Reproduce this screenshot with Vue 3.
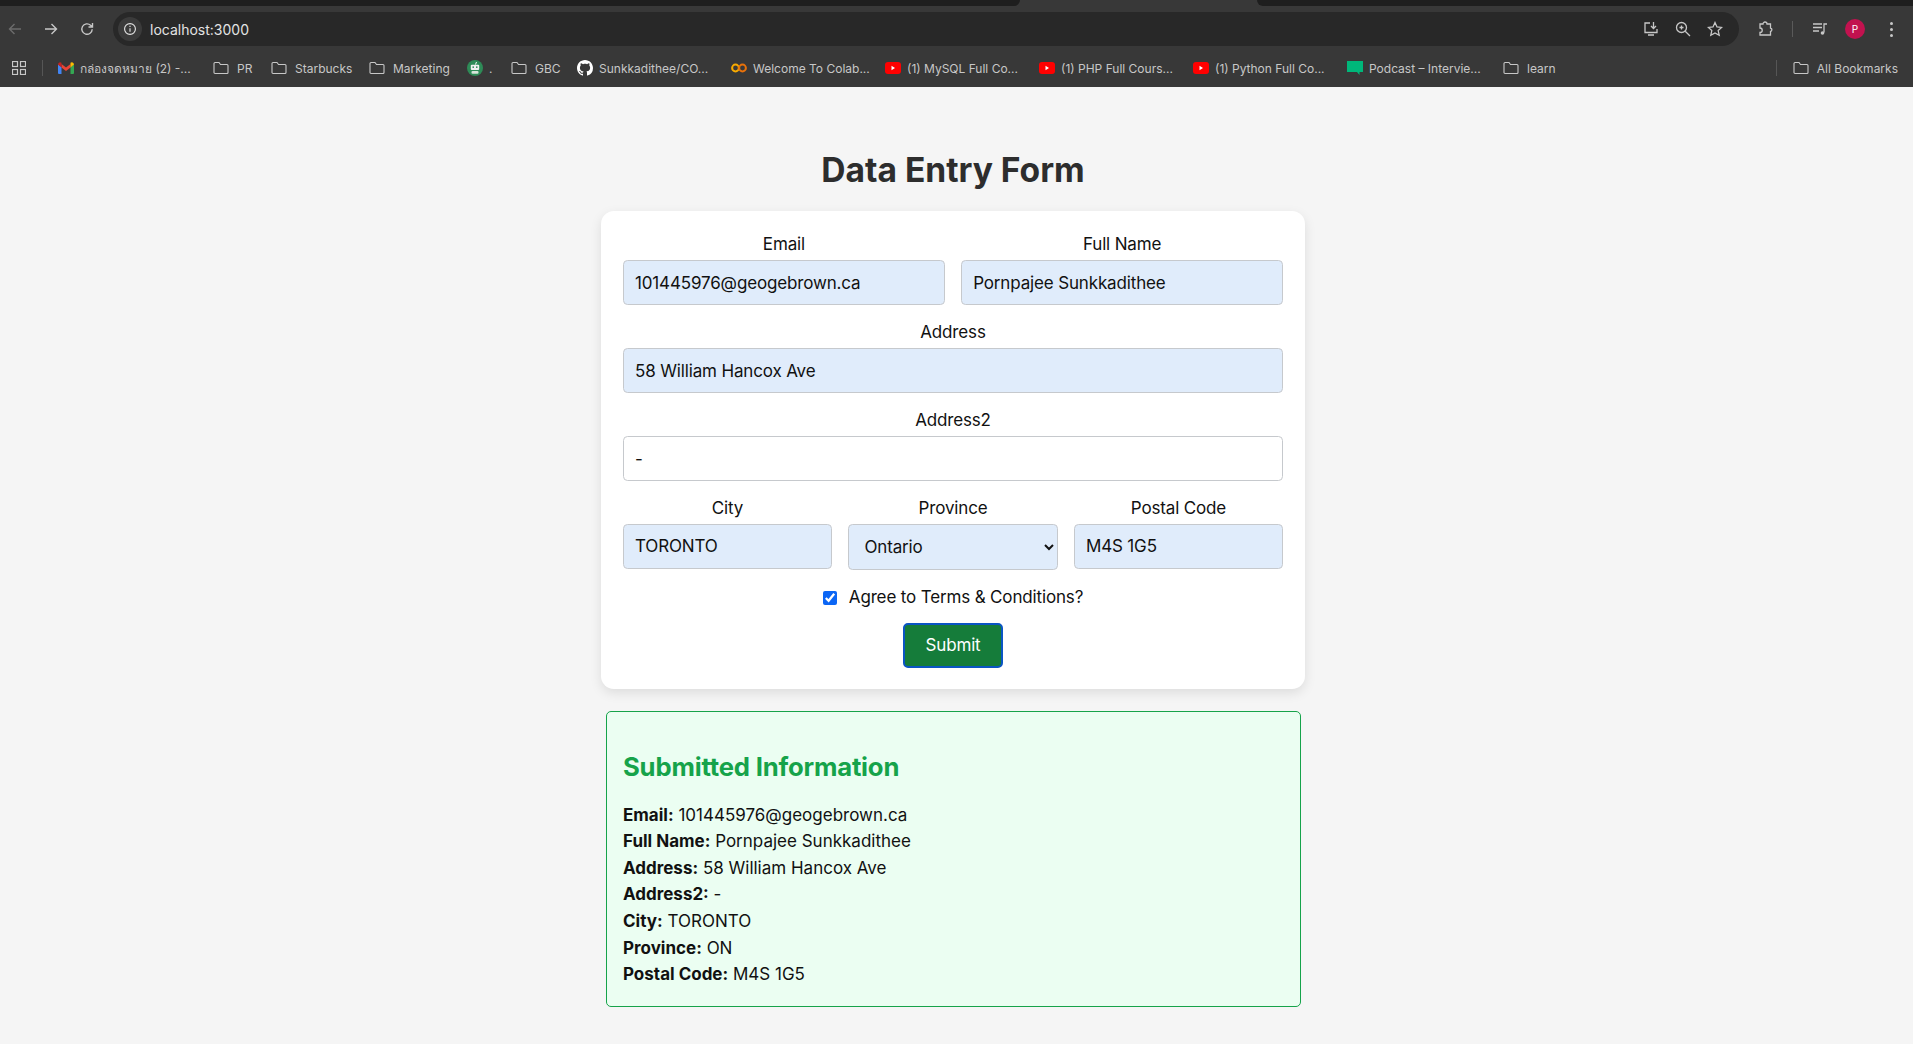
<script setup>
import { reactive } from 'vue'

const bookmarks = [
  { icon: 'gmail', label: 'กล่องจดหมาย (2) -...', width: 155 },
  { icon: 'folder', label: 'PR', width: 58 },
  { icon: 'folder', label: 'Starbucks', width: 98 },
  { icon: 'folder', label: 'Marketing', width: 98 },
  { icon: 'robot', label: '.', width: 44 },
  { icon: 'folder', label: 'GBC', width: 66 },
  { icon: 'github', label: 'Sunkkadithee/CO...', width: 154 },
  { icon: 'colab', label: 'Welcome To Colab...', width: 154 },
  { icon: 'youtube', label: '(1) MySQL Full Co...', width: 154 },
  { icon: 'youtube', label: '(1) PHP Full Cours...', width: 154 },
  { icon: 'youtube', label: '(1) Python Full Co...', width: 154 },
  { icon: 'podcast', label: 'Podcast – Intervie...', width: 156 },
  { icon: 'folder', label: 'learn', width: 60 }
]

const form = reactive({
  email: '101445976@geogebrown.ca',
  fullName: 'Pornpajee Sunkkadithee',
  address: '58 William Hancox Ave',
  address2: '-',
  city: 'TORONTO',
  province: 'ON',
  postal: 'M4S 1G5',
  agree: true
})

const submitted = [
  ['Email:', form.email],
  ['Full Name:', form.fullName],
  ['Address:', form.address],
  ['Address2:', form.address2],
  ['City:', form.city],
  ['Province:', form.province],
  ['Postal Code:', form.postal]
]
</script>

<template>
  <div class="browser">
    <div class="tabstrip">
      <div class="tab-dark left"></div>
      <div class="tab-dark right"></div>
    </div>

    <div class="toolbar">
      <div class="nav">
        <svg class="nav-icon dim" viewBox="0 0 16 16"><path d="M14 8H2.500M7.500 3 2.500 8l5 5" /></svg>
        <svg class="nav-icon" viewBox="0 0 16 16"><path d="M2 8h11.500M8.500 3l5 5-5 5" /></svg>
        <svg class="nav-icon" viewBox="0 0 16 16"><path d="M13.200 8.200a5.200 5.200 0 1 1-1.600-3.900L13.500 6M13.500 2v4h-4" /></svg>
      </div>
      <div class="omnibox">
        <span class="site-info">
          <svg viewBox="0 0 16 16"><circle cx="8" cy="8" r="6.200" /><path d="M8 7.200v4M8 4.400v1.300" /></svg>
        </span>
        <span class="url">localhost:3000</span>
        <div class="omni-actions">
          <svg viewBox="0 0 16 16"><path d="M7 2H2v9.500h12V8M5 14h6M10.500 1v6M8 5l2.500 2.500L13 5" /></svg>
          <svg viewBox="0 0 16 16"><circle cx="6.500" cy="6.500" r="5" /><path d="M10.200 10.200 15 15M4.500 6.500h4M6.500 4.500v4" /></svg>
          <svg viewBox="0 0 16 16"><path d="m8 1.500 2 4.400 4.700.5-3.500 3.200 1 4.700L8 11.900l-4.200 2.400 1-4.700L1.300 6.400 6 5.900z" /></svg>
        </div>
      </div>
      <div class="tool-actions">
        <svg class="ext" viewBox="0 0 16 16"><path d="M3 3h3a2 2 0 0 1 4 0h3.500v4a1.800 1.800 0 0 1 0 3.500V14H3v-2.500a1.800 1.800 0 0 0 0-4.500z" /></svg>
        <span class="tool-sep"></span>
        <svg class="media" viewBox="0 0 16 16"><path d="M1 3h9M1 6.500h9M1 10h6M12 11.500V3h3" /><circle cx="10.500" cy="12" r="1.800" class="solid" /></svg>
        <span class="avatar">P</span>
        <span class="kebab"><i></i><i></i><i></i></span>
      </div>
    </div>

    <div class="bookmarks">
      <svg class="apps" viewBox="0 0 14 14">
        <rect x="0.500" y="0.500" width="5" height="5" />
        <rect x="8.500" y="0.500" width="5" height="5" />
        <rect x="0.500" y="8.500" width="5" height="5" />
        <rect x="8.500" y="8.500" width="5" height="5" />
      </svg>
      <span class="bar-sep"></span>
      <div class="bookmark-list">
        <div v-for="b in bookmarks" :key="b.label" class="bookmark" :style="{ width: b.width + 'px' }">
          <svg v-if="b.icon === 'folder'" class="ic folder" viewBox="0 0 16 14"><path d="M1 2.500A1 1 0 0 1 2 1.500h4l1.500 2H14a1 1 0 0 1 1 1v7a1 1 0 0 1-1 1H2a1 1 0 0 1-1-1z" /></svg>
          <svg v-else-if="b.icon === 'gmail'" class="ic" viewBox="0 0 16 12">
            <path d="M0 2.500V11a1 1 0 0 0 1 1h2.500V5z" fill="#4285f4" />
            <path d="M16 2.500V11a1 1 0 0 1-1 1h-2.500V5z" fill="#34a853" />
            <path d="M3.500 2 8 5.400 12.500 2v3.500L8 8.900 3.500 5.500z" fill="#ea4335" />
            <path d="M0 2.500C0 .6 2.200-.6 3.500.8v4.700z" fill="#c5221f" />
            <path d="M16 2.500C16 .6 13.800-.6 12.500.8v4.700z" fill="#fbbc04" />
          </svg>
          <svg v-else-if="b.icon === 'robot'" class="ic" viewBox="0 0 16 16">
            <circle cx="8" cy="8" r="8" fill="#2e8b57" />
            <path d="M8.500 4.500 9.500 2" stroke="#fff" stroke-width="1" fill="none" />
            <rect x="3.800" y="4.800" width="8.400" height="5.200" rx="1" fill="#f1f1f1" />
            <rect x="5.500" y="6.400" width="1.500" height="1.500" fill="#2e8b57" />
            <rect x="9" y="6.400" width="1.500" height="1.500" fill="#2e8b57" />
            <rect x="4.500" y="11" width="7" height="2.800" rx="1" fill="#d7e4da" />
          </svg>
          <svg v-else-if="b.icon === 'github'" class="ic" viewBox="0 0 16 16">
            <path fill="#fff" d="M8 0C3.580 0 0 3.580 0 8c0 3.540 2.290 6.530 5.470 7.590.4.070.55-.17.55-.38 0-.19-.01-.82-.01-1.490-2.010.37-2.530-.49-2.690-.94-.09-.23-.48-.94-.82-1.130-.28-.15-.68-.52-.01-.53.63-.01 1.080.58 1.230.82.720 1.210 1.870.870 2.330.660.070-.520.280-.870.510-1.070-1.780-.200-3.640-.890-3.640-3.950 0-.870.310-1.590.820-2.150-.080-.200-.360-1.020.080-2.120 0 0 .670-.210 2.200.820.640-.180 1.320-.270 2-.270s1.360.090 2 .270c1.530-1.040 2.200-.820 2.200-.820.440 1.100.160 1.920.080 2.120.510.560.820 1.270.820 2.150 0 3.070-1.870 3.750-3.650 3.950.290.250.540.730.540 1.480 0 1.070-.010 1.930-.010 2.200 0 .210.150.460.550.380A8.010 8.010 0 0 0 16 8c0-4.420-3.580-8-8-8z" />
          </svg>
          <svg v-else-if="b.icon === 'colab'" class="ic" viewBox="0 0 16 10">
            <circle cx="4.500" cy="5" r="3.400" fill="none" stroke="#f9ab00" stroke-width="2" />
            <circle cx="11.500" cy="5" r="3.400" fill="none" stroke="#e8710a" stroke-width="2" />
          </svg>
          <svg v-else-if="b.icon === 'youtube'" class="ic" viewBox="0 0 16 12">
            <rect width="16" height="12" rx="3" fill="#f00" />
            <path d="M6.500 3.800v4.400L10 6z" fill="#fff" />
          </svg>
          <svg v-else-if="b.icon === 'podcast'" class="ic" viewBox="0 0 16 16">
            <path d="M0 1h16v11h-3.500v3L10 12H0z" fill="#00b77a" />
          </svg>
          <span class="bm-label">{{ b.label }}</span>
        </div>
      </div>
      <span class="bar-sep second"></span>
      <div class="bookmark">
        <svg class="ic folder" viewBox="0 0 16 14"><path d="M1 2.500A1 1 0 0 1 2 1.500h4l1.500 2H14a1 1 0 0 1 1 1v7a1 1 0 0 1-1 1H2a1 1 0 0 1-1-1z" /></svg>
        <span class="bm-label">All Bookmarks</span>
      </div>
    </div>
  </div>

  <main class="page">
    <h1 class="title">Data Entry Form</h1>

    <form class="card" @submit.prevent>
      <div class="row two">
        <div class="field">
          <label>Email</label>
          <input v-model="form.email" class="filled" type="text" />
        </div>
        <div class="field">
          <label>Full Name</label>
          <input v-model="form.fullName" class="filled" type="text" />
        </div>
      </div>
      <div class="field">
        <label>Address</label>
        <input v-model="form.address" class="filled" type="text" />
      </div>
      <div class="field">
        <label>Address2</label>
        <input v-model="form.address2" type="text" />
      </div>
      <div class="row three">
        <div class="field">
          <label>City</label>
          <input v-model="form.city" class="filled" type="text" />
        </div>
        <div class="field">
          <label>Province</label>
          <select v-model="form.province" class="filled">
            <option value="ON">Ontario</option>
            <option value="QC">Quebec</option>
          </select>
        </div>
        <div class="field">
          <label>Postal Code</label>
          <input v-model="form.postal" class="filled" type="text" />
        </div>
      </div>
      <label class="agree">
        <input v-model="form.agree" type="checkbox" />
        <span>Agree to Terms &amp; Conditions?</span>
      </label>
      <button class="submit" type="submit">Submit</button>
    </form>

    <section class="result">
      <h2>Submitted Information</h2>
      <p v-for="item in submitted" :key="item[0]"><strong>{{ item[0] }}</strong> {{ item[1] }}</p>
    </section>
  </main>
</template>

<style>
html,
body {
  margin: 0;
  overflow: hidden;
}
</style>

<style scoped>
.browser {
  height: 87px;
  background: #383838;
  font-family: Inter, "Liberation Sans", sans-serif;
  display: flex;
  flex-direction: column;
}

.tabstrip {
  height: 12px;
  display: flex;
  justify-content: space-between;
}

.tab-dark {
  height: 6px;
  background: #1e1e1e;
}

.tab-dark.left {
  width: 1020px;
  border-bottom-right-radius: 6px;
}

.tab-dark.right {
  width: 656px;
  border-bottom-left-radius: 6px;
}

.toolbar {
  height: 34px;
  display: flex;
  align-items: center;
}

.nav {
  width: 113px;
  flex: none;
  display: flex;
  gap: 20px;
  padding-left: 7px;
  box-sizing: border-box;
}

svg {
  display: block;
  flex: none;
}

.nav-icon {
  width: 16px;
  height: 16px;
  fill: none;
  stroke: #c7c7c7;
  stroke-width: 1.400;
}

.nav-icon.dim {
  stroke: #6b6b6b;
}

.omnibox {
  width: 1626px;
  height: 34px;
  flex: none;
  background: #282828;
  border-radius: 17px;
  display: flex;
  align-items: center;
  padding-left: 5px;
  box-sizing: border-box;
}

.site-info {
  width: 24px;
  height: 24px;
  background: #3b3b3b;
  border-radius: 50%;
  display: flex;
  align-items: center;
  justify-content: center;
}

.site-info svg {
  width: 14px;
  height: 14px;
  fill: none;
  stroke: #e3e3e3;
  stroke-width: 1.300;
}

.url {
  margin-left: 8px;
  color: #e3e3e3;
  font-size: 14px;
}

.omni-actions {
  margin-left: auto;
  margin-right: 16px;
  display: flex;
  gap: 16px;
}

.omni-actions svg {
  width: 16px;
  height: 16px;
  fill: none;
  stroke: #c7c7c7;
  stroke-width: 1.300;
}

.tool-actions {
  flex: 1;
  display: flex;
  align-items: center;
  padding-left: 18px;
}

.ext {
  width: 16px;
  height: 16px;
  fill: none;
  stroke: #c7c7c7;
  stroke-width: 1.300;
}

.tool-sep {
  width: 1px;
  height: 16px;
  background: #5a5a5a;
  margin: 0 19px;
}

.media {
  width: 16px;
  height: 16px;
  fill: none;
  stroke: #c7c7c7;
  stroke-width: 1.300;
}

.media .solid {
  fill: #c7c7c7;
  stroke: none;
}

.avatar {
  width: 20px;
  height: 20px;
  margin-left: 17px;
  border-radius: 50%;
  background: #c2124f;
  color: #fff;
  font-size: 10px;
  display: flex;
  align-items: center;
  justify-content: center;
}

.kebab {
  margin-left: 25px;
  display: flex;
  flex-direction: column;
  gap: 3px;
}

.kebab i {
  width: 3px;
  height: 3px;
  border-radius: 50%;
  background: #c7c7c7;
}

.bookmarks {
  height: 41px;
  box-sizing: border-box;
  padding: 3px 15px 0 12px;
  display: flex;
  align-items: center;
}

.apps {
  width: 14px;
  height: 14px;
  fill: none;
  stroke: #c7c7c7;
  stroke-width: 1.200;
}

.bar-sep {
  width: 1px;
  height: 16px;
  background: #565656;
  margin: 0 15px 0 16px;
}

.bar-sep.second {
  margin: 0 16px 0 auto;
}

.bookmark-list {
  display: flex;
}

.bookmark {
  display: flex;
  align-items: center;
  gap: 6px;
}

.ic {
  width: 16px;
  height: 16px;
}

.folder {
  margin-right: 2px;
  fill: none;
  stroke: #c7c7c7;
  stroke-width: 1.100;
}

.bm-label {
  color: #c7c7c7;
  font-size: 12px;
  white-space: nowrap;
  font-family: Inter, "Noto Sans", "DejaVu Sans", sans-serif;
}

.page {
  height: 957px;
  box-sizing: border-box;
  padding: 63px 7px 0 0;
  background: #f5f5f5;
  font-family: Inter, "Liberation Sans", sans-serif;
  color: #111;
  display: flex;
  flex-direction: column;
  align-items: center;
}

.title {
  margin: 0 0 21px;
  font-size: 33.600px;
  line-height: 40px;
  font-weight: 700;
  color: #2d2d2d;
}

.card {
  width: 704px;
  box-sizing: border-box;
  padding: 23px 22px 21px;
  background: #fff;
  border-radius: 13px;
  box-shadow: 0 4px 12px rgba(0, 0, 0, 0.1);
  display: flex;
  flex-direction: column;
  gap: 17.200px;
  font-size: 17px;
  letter-spacing: -0.15px;
  line-height: 26.400px;
}

.row {
  display: grid;
  gap: 16.400px;
}

.row.two {
  grid-template-columns: 1fr 1fr;
}

.row.three {
  grid-template-columns: 1fr 1fr 1fr;
  align-items: start;
}

.field {
  display: flex;
  flex-direction: column;
  text-align: center;
}

.field label {
  line-height: 21px;
  margin-bottom: 5.400px;
}

.field input,
.field select {
  width: 100%;
  height: 44.400px;
  box-sizing: border-box;
  padding: 0 11px;
  border: 1px solid #c6c9cd;
  border-radius: 4.500px;
  background: #fff;
  color: #111;
  font: inherit;
  letter-spacing: inherit;
  outline: none;
}

.field select {
  height: 46px;
}

.field .filled {
  background: #e0ecfb;
}

.agree {
  margin-top: -3px;
  display: flex;
  align-items: center;
  justify-content: center;
  gap: 12px;
}

.agree input {
  width: 14px;
  height: 14px;
  margin: 0;
  accent-color: #0b66f5;
}

.submit {
  align-self: center;
  width: 100px;
  height: 45px;
  margin-top: -5px;
  border: 2px solid #0a55c4;
  border-radius: 5px;
  background: #157c3a;
  color: #fff;
  font: inherit;
  letter-spacing: inherit;
}

.result {
  width: 695px;
  height: 296px;
  margin-top: 22px;
  box-sizing: border-box;
  padding: 0 16.500px;
  border: 1px solid #16a34a;
  border-radius: 5px;
  background: #ebfef2;
  font-size: 17px;
  line-height: 26.600px;
}

.result h2 {
  margin: 37px 0 17.600px;
  font-size: 25.700px;
  letter-spacing: -0.2px;
  line-height: 35px;
  font-weight: 700;
  color: #16a34a;
}

.result p {
  margin: 0;
}

.result strong {
  font-weight: 700;
}
</style>
